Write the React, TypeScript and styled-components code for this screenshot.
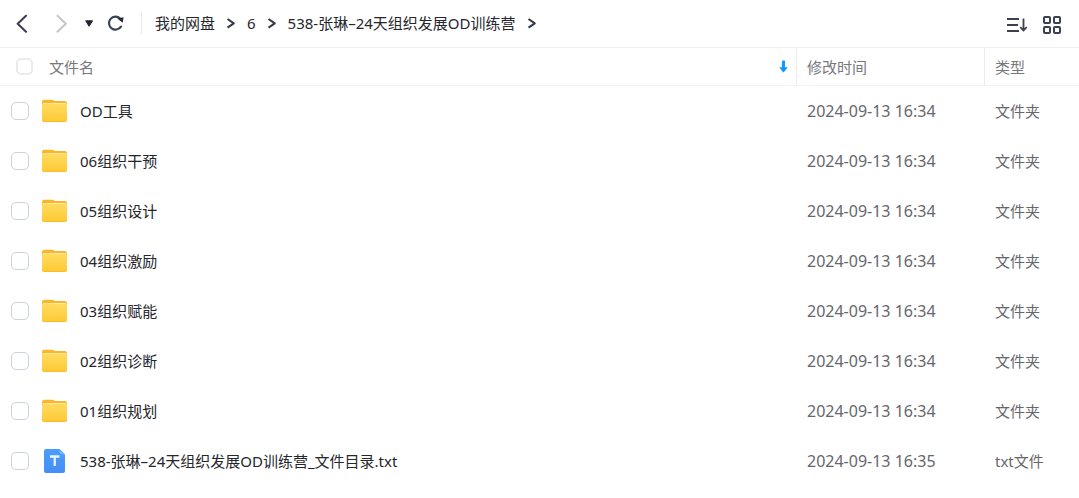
import React from "react";
import styled, { createGlobalStyle } from "styled-components";

const GlobalStyle = createGlobalStyle`
  * { box-sizing: border-box; }
  body {
    margin: 0;
    background: #fff;
    color: #25262b;
    font-family: "Noto Sans", "Noto Sans CJK SC", sans-serif;
    font-size: 15px;
    line-height: 20px;
  }
`;

const Page = styled.main`
  width: 100%;
`;

const Toolbar = styled.header`
  display: flex;
  align-items: center;
  height: 48px;
  padding: 0 17px 2px 12px;
  border-bottom: 1px solid #f0f0f2;
`;

const IconButton = styled.button<{ $width?: number }>`
  display: flex;
  align-items: center;
  justify-content: center;
  width: ${({ $width = 20 }) => $width}px;
  height: 20px;
  padding: 0;
  border: 0;
  background: none;
  color: #3b4152;
  cursor: pointer;

  &:disabled {
    color: #c6c6ca;
    cursor: default;
  }

  svg { display: block; flex: none; }
`;

const History = styled.div`
  display: flex;
  align-items: center;
  flex: none;

  ${IconButton} + ${IconButton} { margin-left: 20px; }
  ${IconButton} + ${IconButton} + ${IconButton} { margin-left: 9px; }
`;

const Divider = styled.span`
  width: 1px;
  height: 22px;
  margin: 0 13px 0 15px;
  background: #e9e9ec;
`;

const Crumbs = styled.nav`
  display: flex;
  align-items: center;
  flex: 1;
  min-width: 0;
  gap: 11px;
  white-space: nowrap;

  svg { display: block; flex: none; }
`;

const Crumb = styled.a`
  color: #25262b;
  text-decoration: none;
`;

const ViewTools = styled.div`
  display: flex;
  gap: 14px;
  padding-top: 4px;
`;

const FileTable = styled.table`
  width: 100%;
  table-layout: fixed;
  border-collapse: separate;
  border-spacing: 0;
`;

const Column = styled.col<{ $width?: number }>`
  width: ${({ $width }) => ($width ? `${$width}px` : "auto")};
`;

const HeadCell = styled.th<{ $first?: boolean }>`
  height: 38px;
  padding: 0 8px 0 ${({ $first }) => ($first ? 16 : 10)}px;
  border-bottom: 1px solid #f4f4f6;
  border-left: ${({ $first }) => ($first ? "0" : "1px solid #ececef")};
  color: #77787e;
  font-weight: 400;
  text-align: left;
`;

const HeadContent = styled.div`
  display: flex;
  align-items: center;
  gap: 16px;
`;

const SortButton = styled(IconButton)`
  margin-left: auto;
  color: #0d99ff;
`;

const Cell = styled.td<{ $kind: "name" | "date" | "type" }>`
  height: 50px;
  padding: 0 0 0 11px;
  color: ${({ $kind }) => ($kind === "name" ? "#25262b" : "#66676c")};
  font-size: ${({ $kind }) => ($kind === "date" ? 16 : 15)}px;
  white-space: nowrap;
`;

const FileEntry = styled.div`
  display: flex;
  align-items: center;
`;

const FileLabel = styled.label`
  display: flex;
  align-items: center;
  gap: 12px;
  margin-left: 12px;

  svg { display: block; flex: none; }
`;

const Checkbox = styled.input<{ $muted?: boolean }>`
  appearance: none;
  flex: none;
  width: ${({ $muted }) => ($muted ? 17 : 18)}px;
  height: ${({ $muted }) => ($muted ? 17 : 18)}px;
  margin: 0;
  border: ${({ $muted }) => ($muted ? "2px solid #ebebed" : "1px solid #ccd3dc")};
  border-radius: 5px;
  background: #fff;

  &:checked { background: #0d99ff; }
`;

const BackIcon = () => (
  <svg width="20" height="20" viewBox="0 0 20 20" fill="none" stroke="currentColor" strokeWidth="2.1" strokeLinecap="round" strokeLinejoin="round" aria-hidden="true">
    <path d="M14 2.8 5.7 10.8 14 18.8" />
  </svg>
);

const ForwardIcon = () => (
  <svg width="20" height="20" viewBox="0 0 20 20" fill="none" stroke="currentColor" strokeWidth="2" strokeLinecap="round" strokeLinejoin="round" aria-hidden="true">
    <path d="M5.5 2.8 13.8 10.8 5.5 18.8" />
  </svg>
);

const CaretIcon = () => (
  <svg width="8" height="8" viewBox="0 0 8 8" aria-hidden="true">
    <path d="M.7 1.8h6.8L4.1 7.3Z" fill="#22242d" stroke="#22242d" strokeLinejoin="round" />
  </svg>
);

const RefreshIcon = () => (
  <svg width="20" height="20" viewBox="0 0 20 20" aria-hidden="true">
    <path d="M14.1 5.5A6.5 6.5 0 1 0 15 13.6" fill="none" stroke="currentColor" strokeWidth="2.1" strokeLinecap="round" />
    <path d="m11.3 5.4 6.3-1.1-.9 5.4Z" fill="#272b37" />
  </svg>
);

const CrumbArrow = () => (
  <svg width="10" height="12" viewBox="0 0 10 12" fill="none" stroke="#343946" strokeWidth="2" strokeLinejoin="round" aria-hidden="true">
    <path d="m1.5 2 6.3 4.3-6.3 4.3" />
  </svg>
);

const SortIcon = () => (
  <svg width="22" height="20" viewBox="0 0 22 20" fill="none" stroke="currentColor" strokeWidth="2" aria-hidden="true">
    <path d="M1 4h12M1 10h11M1 16h12" />
    <path d="M17.5 3.5V15M14.3 12.2l3.2 3.3 3.2-3.3" strokeWidth="1.8" />
  </svg>
);

const GridIcon = () => (
  <svg width="20" height="20" viewBox="0 0 20 20" fill="none" stroke="currentColor" strokeWidth="2" aria-hidden="true">
    <rect x="2" y="2" width="6" height="6" rx="1" />
    <rect x="12" y="2" width="6" height="6" rx="1" />
    <rect x="2" y="12" width="6" height="6" rx="1" />
    <rect x="12" y="12" width="6" height="6" rx="1" />
  </svg>
);

const DownIcon = () => (
  <svg width="9" height="13" viewBox="0 0 9 13" aria-hidden="true">
    <path d="M3 1.2Q3 .5 3.7.5h1.6q.7 0 .7.7v6h2.1q.7 0 .3.6L5 12q-.5.6-1 0L.6 7.8Q.2 7.2.9 7.2H3Z" fill="currentColor" />
  </svg>
);

const FolderIcon = () => (
  <svg width="27" height="26" viewBox="0 0 27 26" aria-hidden="true">
    <defs>
      <linearGradient id="folder-front" x1="0" y1="0" x2="0" y2="1">
        <stop stopColor="#ffdc62" />
        <stop offset="1" stopColor="#ffc934" />
      </linearGradient>
    </defs>
    <path d="M1 4q0-2.3 2.3-2.3h8.3q1 0 1.7.8l.5.5h10q2.2 0 2.2 2.2V9H1Z" fill="#fdb62b" />
    <path d="M1 7q0-2 2-2h21q2 0 2 2v14.5q0 2.5-2.5 2.5h-20Q1 24 1 21.5Z" fill="url(#folder-front)" />
    <path d="M2 6.2q.3-.7 1.2-.7h20.6q.9 0 1.2.7" fill="none" stroke="#ffe99c" />
    <path d="M1.5 21.7q.2 1.8 2 1.8h20q1.8 0 2-1.8" fill="none" stroke="#fdbc27" />
  </svg>
);

const TextFileIcon = () => (
  <svg width="27" height="26" viewBox="0 0 27 26" aria-hidden="true">
    <defs>
      <linearGradient id="text-file" x1="0" y1="0" x2="0" y2="1">
        <stop stopColor="#4b9dfb" />
        <stop offset="1" stopColor="#468df6" />
      </linearGradient>
    </defs>
    <path d="M5 1h13.5L24 6.5V23q0 2-2 2H5q-2 0-2-2V3q0-2 2-2Z" fill="url(#text-file)" />
    <path d="M18.5 1 24 6.5h-3.5q-2 0-2-2Z" fill="#6fb0ff" />
    <path d="M9 8.5h9.5M13.75 8.5V18" fill="none" stroke="#e9f3ff" strokeWidth="2.3" />
  </svg>
);

interface FileItem {
  name: string;
  modified: string;
  type: string;
}

const folders = ["OD工具", "06组织干预", "05组织设计", "04组织激励", "03组织赋能", "02组织诊断", "01组织规划"];

const files: FileItem[] = [
  ...folders.map((name) => ({ name, modified: "2024-09-13 16:34", type: "文件夹" })),
  { name: "538-张琳–24天组织发展OD训练营_文件目录.txt", modified: "2024-09-13 16:35", type: "txt文件" },
];

const FileRow = ({ file, id }: { file: FileItem; id: string }) => (
  <tr>
    <Cell $kind="name">
      <FileEntry>
        <Checkbox type="checkbox" id={id} />
        <FileLabel htmlFor={id}>
          {file.type === "文件夹" ? <FolderIcon /> : <TextFileIcon />}
          {file.name}
        </FileLabel>
      </FileEntry>
    </Cell>
    <Cell $kind="date">{file.modified}</Cell>
    <Cell $kind="type">{file.type}</Cell>
  </tr>
);

export default function App() {
  return (
    <Page>
      <GlobalStyle />
      <Toolbar>
        <History>
          <IconButton aria-label="后退"><BackIcon /></IconButton>
          <IconButton aria-label="前进" disabled><ForwardIcon /></IconButton>
          <IconButton aria-label="历史记录" $width={16}><CaretIcon /></IconButton>
          <IconButton aria-label="刷新"><RefreshIcon /></IconButton>
        </History>
        <Divider />
        <Crumbs aria-label="路径">
          <Crumb href="#root">我的网盘</Crumb>
          <CrumbArrow />
          <Crumb href="#6">6</Crumb>
          <CrumbArrow />
          <Crumb href="#538">538-张琳–24天组织发展OD训练营</Crumb>
          <CrumbArrow />
        </Crumbs>
        <ViewTools>
          <IconButton aria-label="排序" $width={22}><SortIcon /></IconButton>
          <IconButton aria-label="网格视图"><GridIcon /></IconButton>
        </ViewTools>
      </Toolbar>
      <FileTable>
        <colgroup>
          <Column />
          <Column $width={188} />
          <Column $width={95} />
        </colgroup>
        <thead>
          <tr>
            <HeadCell $first scope="col">
              <HeadContent>
                <Checkbox type="checkbox" $muted aria-label="全选" />
                文件名
                <SortButton aria-label="降序" $width={9}><DownIcon /></SortButton>
              </HeadContent>
            </HeadCell>
            <HeadCell scope="col">修改时间</HeadCell>
            <HeadCell scope="col">类型</HeadCell>
          </tr>
        </thead>
        <tbody>
          {files.map((file, index) => (
            <FileRow key={file.name} file={file} id={`file-${index}`} />
          ))}
        </tbody>
      </FileTable>
    </Page>
  );
}
